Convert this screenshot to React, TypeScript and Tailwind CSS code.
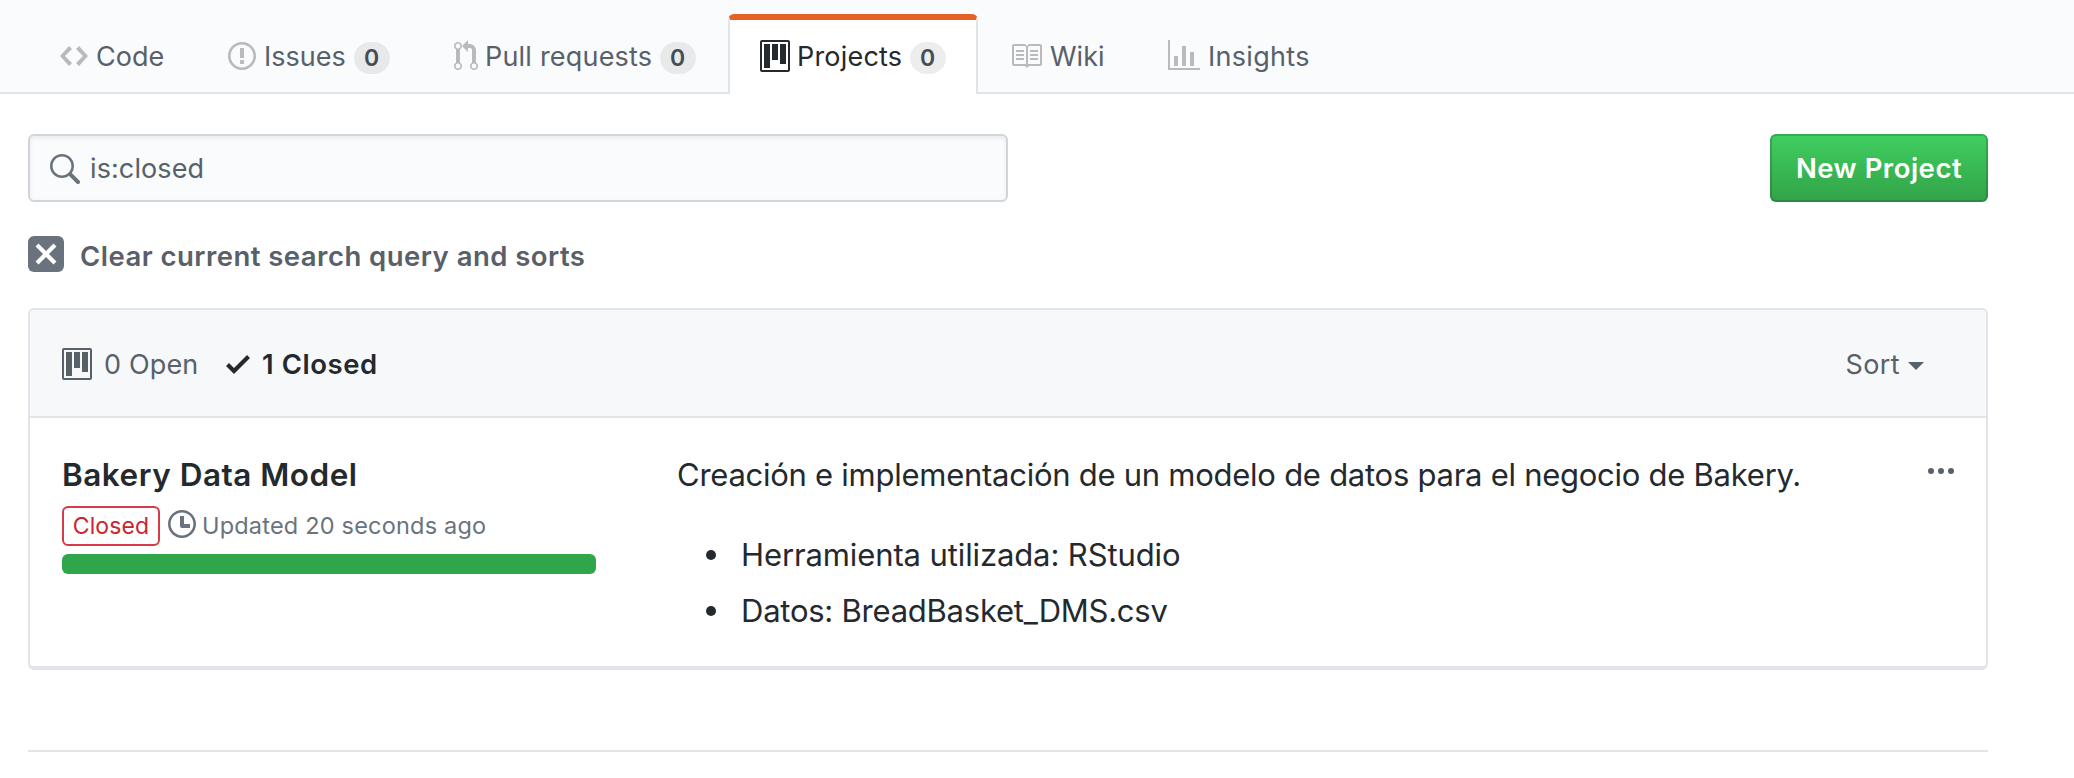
import React from "react";

const paths = {
  code: "M9.5 3L8 4.5 11.5 8 8 11.5 9.5 13 14 8 9.5 3zm-5 0L0 8l4.5 5L6 11.5 2.5 8 6 4.5 4.5 3z",
  issue: "M7 2.3c3.14 0 5.7 2.56 5.7 5.7s-2.56 5.7-5.7 5.7A5.71 5.71 0 0 1 1.3 8c0-3.14 2.56-5.7 5.7-5.7zM7 1C3.14 1 0 4.14 0 8s3.14 7 7 7 7-3.14 7-7-3.14-7-7-7zm1 3H6v5h2V4zm0 6H6v2h2v-2z",
  pull: "M11 11.28V5c-.03-.78-.34-1.47-.94-2.06C9.46 2.35 8.78 2.03 8 2H7V0L4 3l3 3V4h1c.27.02.48.11.69.31.21.2.3.42.31.69v6.28A1.993 1.993 0 0 0 10 15a1.993 1.993 0 0 0 1-3.72zm-1 2.92c-.66 0-1.2-.55-1.2-1.2 0-.65.55-1.2 1.2-1.2.65 0 1.2.55 1.2 1.2 0 .65-.55 1.2-1.2 1.2zM4 3c0-1.11-.89-2-2-2a1.993 1.993 0 0 0-1 3.72v6.56A1.993 1.993 0 0 0 2 15a1.993 1.993 0 0 0 1-3.72V4.72c.59-.34 1-.98 1-1.72zm-.8 10c0 .66-.55 1.2-1.2 1.2-.65 0-1.2-.55-1.2-1.2 0-.65.55-1.2 1.2-1.2.65 0 1.2.55 1.2 1.2zM2 4.2C1.34 4.2.8 3.65.8 3c0-.65.55-1.2 1.2-1.2.65 0 1.2.55 1.2 1.2 0 .65-.55 1.2-1.2 1.2z",
  project: "M10 12h3V2h-3v10zm-4-2h3V2H6v8zm-4 4h3V2H2v12zm-1 1h13V1H1v14zM14 0H1a1 1 0 0 0-1 1v14a1 1 0 0 0 1 1h13a1 1 0 0 0 1-1V1a1 1 0 0 0-1-1z",
  book: "M3 5h4v1H3V5zm0 3h4V7H3v1zm0 2h4V9H3v1zm11-5h-4v1h4V5zm0 2h-4v1h4V7zm0 2h-4v1h4V9zm2-6v9c0 .55-.45 1-1 1H9.5l-1 1-1-1H2c-.55 0-1-.45-1-1V3c0-.55.45-1 1-1h5.5l1 1 1-1H15c.55 0 1 .45 1 1zm-8 .5L7.5 3H2v9h6V3.5zm7-.5H9.5l-.5.5V12h6V3z",
  graph: "M16 14v1H0V0h1v14h15zM5 13H3V8h2v5zm4 0H7V3h2v10zm4 0h-2V6h2v7z",
  search: "M15.7 13.3l-3.81-3.83A5.93 5.93 0 0 0 13 6c0-3.31-2.69-6-6-6S1 2.69 1 6s2.69 6 6 6c1.3 0 2.48-.41 3.47-1.11l3.83 3.81c.19.2.45.3.7.3.25 0 .52-.09.7-.3a.996.996 0 0 0 0-1.41v.01zM7 10.7c-2.59 0-4.7-2.11-4.7-4.7 0-2.59 2.11-4.7 4.7-4.7 2.59 0 4.7 2.11 4.7 4.7 0 2.59-2.11 4.7-4.7 4.7z",
  x: "M7.48 8l3.75 3.75-1.48 1.48L6 9.48l-3.75 3.75-1.48-1.48L4.52 8 .77 4.25l1.48-1.48L6 6.52l3.75-3.75 1.48 1.48L7.48 8z",
  check: "M12 5l-8 8-4-4 1.5-1.5L4 10l6.5-6.5L12 5z",
  clock: "M8 8h3v2H7c-.55 0-1-.45-1-1V4h2v4zM7 2.3c3.14 0 5.7 2.56 5.7 5.7s-2.56 5.7-5.7 5.7A5.71 5.71 0 0 1 1.3 8c0-3.14 2.56-5.7 5.7-5.7zM7 1C3.14 1 0 4.14 0 8s3.14 7 7 7 7-3.14 7-7-3.14-7-7-7z",
  kebab: "M1.5 9a1.5 1.5 0 1 0 0-3 1.5 1.5 0 0 0 0 3zm5 0a1.5 1.5 0 1 0 0-3 1.5 1.5 0 0 0 0 3zM13 7.5a1.5 1.5 0 1 1-3 0 1.5 1.5 0 0 1 3 0z",
};

function Icon({ name, w, className = "" }: { name: keyof typeof paths; w: number; className?: string }) {
  return (
    <svg viewBox={`0 0 ${w} 16`} width={w * 2} height={32} fill="currentColor" fillRule="evenodd" className={`shrink-0 ${className}`}>
      <path d={paths[name]} />
    </svg>
  );
}

function Counter() {
  return (
    <span className="mt-1 flex h-8 w-9 shrink-0 items-center justify-center rounded-full bg-black/7 pr-px text-[23px] font-semibold text-[#444d56]">
      0
    </span>
  );
}

export default function App() {
  return (
    <div className="flex h-[778px] w-[2074px] flex-col overflow-hidden bg-white font-['Inter',sans-serif] text-[27px] leading-[42px] whitespace-nowrap text-[#24292e]">
      <nav className="flex h-[94px] shrink-0 items-end border-b-2 border-[#e1e4e8] bg-[#fafbfd] text-[#586069]">
        <a className="flex h-[72px] w-[168px] items-center pl-[60px]">
          <Icon name="code" w={14} className="text-[#bababa]" />
          <span className="mt-[2px] ml-[8px]">Code</span>
        </a>
        <a className="flex h-[72px] w-[226px] items-center pl-[60px]">
          <Icon name="issue" w={14} className="text-[#bababa]" />
          <span className="mt-[2px] ml-[8px] w-[90px]">Issues</span>
          <Counter />
        </a>
        <a className="flex h-[72px] w-[334px] items-center pl-[60px]">
          <Icon name="pull" w={12} className="text-[#bababa]" />
          <span className="mt-[2px] ml-[7px] w-[175px] tracking-[0.2px]">Pull requests</span>
          <Counter />
        </a>
        <a className="-mb-[2px] flex h-[80px] w-[250px] items-center rounded-t-[6px] border-x-2 border-t-[6px] border-x-[#e1e4e8] border-t-[#e36224] bg-white pb-[2px] pl-[30px] text-[#24292e]">
          <Icon name="project" w={15} />
          <span className="mt-[2px] ml-[7px] w-[113px] tracking-[0.2px]">Projects</span>
          <Counter />
        </a>
        <a className="flex h-[72px] w-[158px] items-center pl-[32px]">
          <Icon name="book" w={16} className="text-[#bababa]" />
          <span className="mt-[2px] ml-[8px]">Wiki</span>
        </a>
        <a className="flex h-[72px] items-center pl-[32px]">
          <Icon name="graph" w={16} className="text-[#bababa]" />
          <span className="mt-[2px] ml-[8px] tracking-[0.3px]">Insights</span>
        </a>
      </nav>

      <main className="ml-7 flex w-[1960px] flex-col pt-10">
        <div className="flex h-[68px] justify-between">
          <div className="flex w-[980px] items-center rounded-[6px] border-2 border-[#d1d5da] bg-[#fafbfd] pl-[18px] text-[#586069] shadow-[inset_0_2px_4px_rgba(27,31,35,0.075)]">
            <Icon name="search" w={16} className="mt-1 text-[#6a737d]" />
            <span className="mt-[2px] ml-[10px] tracking-[0.1px]">is:closed</span>
          </div>
          <button className="flex w-[218px] items-center justify-center rounded-[6px] border-2 border-[#1b1f23]/20 bg-linear-to-b from-[#40cf60] to-[#32a348] bg-origin-border font-semibold text-white">
            <span className="text-[27.5px] tracking-[0.5px]">New Project</span>
          </button>
        </div>

        <a className="mt-[34px] flex h-9 items-center font-semibold text-[#586069]">
          <span className="flex h-9 w-9 items-center justify-center rounded-[6px] bg-[#6a737d] text-white">
            <Icon name="x" w={12} />
          </span>
          <span className="mt-[3px] ml-[16px] text-[27.5px] tracking-[0.47px]">Clear current search query and sorts</span>
        </a>

        <section className="mt-9 flex h-[362px] flex-col rounded-[6px] border-2 border-b-4 border-[#e1e4e8]">
          <header className="flex h-[108px] shrink-0 items-center rounded-t-[4px] border-b-2 border-[#e1e4e8] bg-[#f6f8fa] pl-8 text-[#586069]">
            <Icon name="project" w={15} className="mt-[2px]" />
            <span className="mt-[3px] ml-[12px] w-[122px] tracking-[0.15px]">0 Open</span>
            <Icon name="check" w={12} className="mt-[2px] text-[#24292e]" />
            <span className="mt-[1px] ml-[12px] text-[27.5px] font-semibold tracking-[0.55px] text-[#24292e]">1 Closed</span>
            <span className="mt-[3px] ml-auto tracking-[0.4px]">Sort</span>
            <svg width="16" height="8" viewBox="0 0 16 8" fill="currentColor" className="mt-[5px] mr-[62px] ml-[8px]">
              <path d="M0 0h16L8 8z" />
            </svg>
          </header>

          <div className="flex pl-8">
            <div className="flex w-[534px] flex-col pt-[33px]">
              <h4 className="text-[31.5px] leading-[48px] font-semibold tracking-[0.5px]">Bakery Data Model</h4>
              <div className="mt-[7px] flex h-10 items-center text-[23.5px] text-[#6a737d]">
                <span className="flex h-10 w-[98px] items-center justify-center rounded-[6px] border-2 border-[#d73a49] text-[23px] text-[#cb2431]">
                  <span className="tracking-[0.1px]">Closed</span>
                </span>
                <Icon name="clock" w={14} className="mb-1 ml-2" />
                <span className="ml-[6px] tracking-[0.2px]">Updated 20 seconds ago</span>
              </div>
              <div className="mt-2 h-5 rounded-[6px] bg-[#30a64a]" />
            </div>
            <div className="ml-[80px] flex w-[1252px] flex-col pt-[33px] text-[31px] leading-[48px]">
              <p className="ml-px tracking-[-0.26px]">Creación e implementación de un modelo de datos para el negocio de Bakery.</p>
              <ul className="mt-8 flex flex-col gap-2">
                <li className="flex items-center">
                  <span className="mr-[25px] ml-[30px] h-[10px] w-[10px] rounded-full bg-[#24292e]" />
                  <span className="tracking-[-0.11px]">Herramienta utilizada: RStudio</span>
                </li>
                <li className="flex items-center">
                  <span className="mr-[25px] ml-[30px] h-[10px] w-[10px] rounded-full bg-[#24292e]" />
                  <span className="tracking-[-0.24px]">Datos: BreadBasket_DMS.csv</span>
                </li>
              </ul>
            </div>
            <Icon name="kebab" w={13} className="mt-[38px] text-[#586069]" />
          </div>
        </section>

        <hr className="mt-20 border-t-2 border-[#e1e4e8]" />
      </main>
    </div>
  );
}
